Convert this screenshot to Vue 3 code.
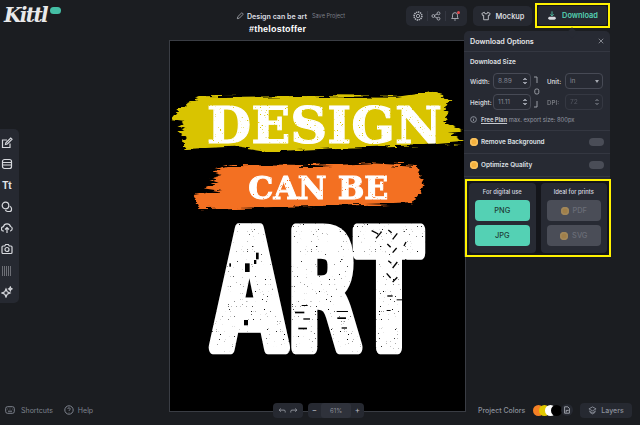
<script setup>
const speckA = [[135,160,14,26],[168,128,8,20],[88,160,5,10],[162,150,7,12],[132,330,12,16]]
const dashes = [[285,305,28,5],[310,325,20,4],[295,353,26,5],[305,285,18,3],[412,322,26,5],[410,303,34,3],[425,352,16,4],[562,256,16,4],[590,268,20,3],[560,300,12,3]]
const slashes = [[515,62,535,72],[528,85,545,65],[565,60,575,68],[578,88,592,70],[612,108,618,96],[562,102,572,112],[578,128,590,114],[565,152,574,160],[578,174,592,156],[560,190,572,204],[578,216,592,202]]
</script>

<template>
  <div class="app">
    <header class="top">
      <div class="brand">
        <span class="logo">Kittl</span>
        <span class="badge"></span>
      </div>
      <div class="title">
        <div class="title-row">
          <svg class="pencil" viewBox="0 0 12 12"><path d="M2 10l.7-3L8 1.8a1.2 1.2 0 0 1 1.7 0l.5.5a1.2 1.2 0 0 1 0 1.7L5 9.300z" /></svg>
          <span class="name">Design can be art</span>
          <span class="save">Save Project</span>
        </div>
        <div class="tag">#thelostoffer</div>
      </div>
      <div class="top-actions">
        <div class="tool-group">
          <svg class="ticon" viewBox="0 0 12 12"><circle cx="6" cy="6" r="4.700" stroke-dasharray="1.600 .8" stroke-width="1.800" /><circle cx="6" cy="6" r="2" /></svg>
          <i class="sep"></i>
          <svg class="ticon" viewBox="0 0 12 12"><circle cx="2.800" cy="6" r="1.700" /><circle cx="9" cy="2.800" r="1.700" /><circle cx="9" cy="9.200" r="1.700" /><path d="M4.300 5.200l3.200-1.700M4.300 6.800l3.200 1.700" /></svg>
          <i class="sep"></i>
          <span class="bell">
            <svg class="ticon" viewBox="0 0 12 12"><path d="M2 9h8L9 7.500V5a3 3 0 0 0-6 0v2.500zM5 10.800h2" /></svg>
            <b class="dot"></b>
          </span>
        </div>
        <button class="mockup">
          <svg class="shirt" viewBox="0 0 12 12"><path d="M4 1.500L1 3l1 2.500 1.200-.4V10.500h5.600V5.100l1.200.4L11 3 8 1.500a2 2 0 0 1-4 0z" /></svg>
          Mockup
        </button>
        <div class="hl-download">
          <button class="download">
            <svg class="dl" viewBox="0 0 12 12"><path class="dl-stroke" d="M6 1v5M4 4.500L6 6.500 8 4.500" /><rect class="dl-fill" x="1.500" y="7.500" width="9" height="3.500" rx="1.700" /></svg>
            Download
          </button>
        </div>
      </div>
    </header>

    <aside class="tools">
      <svg viewBox="0 0 12 12"><path d="M9 6.500V10.500H1.500V3H6" /><path d="M4.500 7.500l.4-1.800L9.700 1l1.300 1.300L6.300 7z" /></svg>
      <svg viewBox="0 0 12 12"><rect x="1.500" y="1.500" width="9" height="9" rx="2" /><path d="M1.500 4.500h9M1.500 7h9" /></svg>
      <span class="tt">Tt</span>
      <svg viewBox="0 0 12 12"><circle cx="4.500" cy="4.500" r="3.300" /><path d="M8.800 5.200c1 .4 1.700 1 1.700 2.300v1a2 2 0 0 1-2 2h-2c-1 0-1.700-.5-2.100-1.400" /></svg>
      <svg viewBox="0 0 12 12"><path d="M3 9H2.800a2.200 2.200 0 0 1-.3-4.400 3.600 3.600 0 0 1 7-.1A2.300 2.300 0 0 1 9.300 9H9M6 11V6M4 7.500L6 5.500 8 7.500" /></svg>
      <svg viewBox="0 0 12 12"><path d="M1 4a1 1 0 0 1 1-1h1.700l1-1.500h2.600l1 1.500H10a1 1 0 0 1 1 1v5.500a1 1 0 0 1-1 1H2a1 1 0 0 1-1-1z" /><circle cx="6" cy="6.500" r="2" /></svg>
      <svg viewBox="0 0 12 12" class="grid-ic"><path d="M1 2h10M1 4h10M1 6h10M1 8h10M1 10h10" stroke-dasharray="1 1" /></svg>
      <svg viewBox="0 0 12 12"><path d="M5 3l1.200 2.800L9 7 6.200 8.200 5 11 3.800 8.200 1 7l2.800-1.200zM9.300 1l.6 1.300 1.100.6-1.100.5-.6 1.300-.6-1.300-1.100-.5 1.100-.6z" /></svg>
    </aside>

    <main class="poster">
      <svg class="art" viewBox="0 0 295 370">
        <defs>
          <filter id="rough" x="-5%" y="-10%" width="110%" height="120%">
            <feTurbulence type="fractalNoise" baseFrequency="0.012 0.12" numOctaves="3" seed="4" />
            <feDisplacementMap in="SourceGraphic" scale="26" xChannelSelector="R" yChannelSelector="G" />
          </filter>
          <filter id="worn" x="-5%" y="-5%" width="110%" height="110%">
            <feTurbulence type="fractalNoise" baseFrequency="0.8" numOctaves="2" seed="7" result="n" />
            <feColorMatrix in="n" type="matrix" values="0 0 0 0 0  0 0 0 0 0  0 0 0 0 0  0 0 0 -9 7.300" result="m" />
            <feComposite in="SourceGraphic" in2="m" operator="in" />
          </filter>
        </defs>
        <g transform="translate(-5 39) scale(0.3333)">
          <path class="yellow" filter="url(#rough)" d="M20 118L40 92 65 70 110 52 400 48 700 50 800 35 830 45 850 65 835 90 850 100 835 125 895 155 850 158 895 185 780 195 500 205 300 215 200 200 60 207 50 180 70 175 40 150 60 140 45 130 55 122Z" />
          <path class="orange" filter="url(#rough)" d="M130 272L200 255 440 258 620 250 755 258 770 300 780 320 740 370 600 375 350 380 105 388 85 345 175 330 120 322 160 305 130 295 170 285Z" />
          <text class="slab" filter="url(#worn)" x="125" y="188" font-size="150" textLength="706" lengthAdjust="spacingAndGlyphs">DESIGN</text>
          <text class="slab" filter="url(#worn)" x="250" y="358" font-size="96" textLength="420" lengthAdjust="spacingAndGlyphs">CAN BE</text>
        </g>
        <g transform="translate(30 169) scale(0.3333)">
          <text class="block" filter="url(#worn)" transform="translate(37 412) scale(.6 1)" x="0" y="0" font-size="480">ART</text>
          <rect v-for="(d, i) in speckA.concat(dashes)" :key="i" :x="d[0]" :y="d[1]" :width="d[2]" :height="d[3]" fill="#000" />
          <line v-for="(s, i) in slashes" :key="'s' + i" :x1="s[0]" :y1="s[1]" :x2="s[2]" :y2="s[3]" stroke="#000" stroke-width="4" />
        </g>
      </svg>
    </main>

    <section class="panel">
      <span class="caret"></span>
      <div class="p-head">
        <span>Download Options</span>
        <svg viewBox="0 0 8 8"><path d="M1 1l6 6M7 1L1 7" /></svg>
      </div>
      <div class="p-size">
        <div class="p-label">Download Size</div>
        <div class="fields">
          <label>Width:</label>
          <div class="field"><span>8.89</span><em></em></div>
          <svg class="link" viewBox="0 0 8 34"><path d="M1 2h3v6M1 32h3v-6" /><rect x="1.800" y="14" width="4" height="5" rx="1.500" /></svg>
          <label class="gap">Unit:</label>
          <div class="field"><span>in</span><u></u></div>
          <label>Height:</label>
          <div class="field"><span>11.11</span><em></em></div>
          <label class="gap dim">DPI:</label>
          <div class="field dim"><span>72</span><em></em></div>
        </div>
        <div class="info">
          <svg viewBox="0 0 8 8"><circle cx="4" cy="4" r="3.300" /><path d="M4 3.500v2.200M4 2v.7" /></svg>
          <span><a>Free Plan</a> max. export size: 800px</span>
        </div>
      </div>
      <div class="opt"><b class="crown"></b><span>Remove Background</span><i class="toggle"></i></div>
      <div class="opt"><b class="crown"></b><span>Optimize Quality</span><i class="toggle"></i></div>
      <div class="formats">
        <div class="fcard">
          <h4>For digital use</h4>
          <button class="fbtn">PNG</button>
          <button class="fbtn">JPG</button>
        </div>
        <div class="fcard">
          <h4>Ideal for prints</h4>
          <button class="fbtn off"><b class="crown faded"></b>PDF</button>
          <button class="fbtn off"><b class="crown faded"></b>SVG</button>
        </div>
      </div>
    </section>

    <footer class="bottom">
      <div class="links">
        <svg viewBox="0 0 10 10"><rect x=".7" y="1.700" width="8.600" height="6.600" rx="1.800" /><path d="M2.500 4h.5M4.700 4h.6M7 4h.5M3 6.200h4" /></svg>
        <span>Shortcuts</span>
        <svg class="help-ic" viewBox="0 0 10 10"><circle cx="5" cy="5" r="4.200" /><path d="M3.800 4a1.200 1.200 0 1 1 1.700 1.100c-.4.200-.5.400-.5.900M5 7.200v.4" /></svg>
        <span>Help</span>
      </div>
      <div class="zoombar">
        <div class="pill undo">
          <svg viewBox="0 0 10 8"><path d="M9 6.500V5a1.500 1.500 0 0 0-1.500-1.500H1.500M3.500 1.500l-2 2 2 2" /></svg>
          <svg viewBox="0 0 10 8"><path d="M1 6.500V5a1.500 1.500 0 0 1 1.500-1.500h6M6.500 1.500l2 2-2 2" /></svg>
        </div>
        <div class="pill zoom">
          <span class="sym">−</span><span class="pct">61%</span><span class="sym">+</span>
        </div>
      </div>
      <div class="right">
        <span class="pc">Project Colors</span>
        <div class="swatches">
          <i class="c1"></i><i class="c2"></i><i class="c3"></i><i class="c4"></i>
          <span class="file"><svg viewBox="0 0 10 10"><path d="M2 1h4l2 2v6H2zM4 8V5.500h3" /></svg></span>
        </div>
        <button class="layers">
          <svg viewBox="0 0 10 10"><path d="M5 1l4 2.200L5 5.400 1 3.200zM1.200 5.500L5 7.600l3.800-2.100M2 7l3 1.700L8 7" /></svg>
          Layers
        </button>
      </div>
    </footer>
  </div>
</template>

<style scoped>
.app {
  width: 640px;
  height: 425px;
  overflow: hidden;
  position: relative;
  display: grid;
  grid-template: 425px / 640px;
  background: #1b1d21;
  font-family: Inter, "Liberation Sans", sans-serif;
  color: #c9ccd3;
}
.app > * { grid-area: 1 / 1; }
svg { fill: none; stroke: currentColor; stroke-width: 1; display: block; }
button { font-family: inherit; border: 0; padding: 0; }

/* header */
.top {
  align-self: start;
  height: 34px;
  display: flex;
  align-items: flex-start;
  z-index: 2;
  position: relative;
}
.brand { display: flex; align-items: flex-start; padding: 4px 0 0 4px; width: 234px; box-sizing: content-box; }
.logo {
  font: italic 700 20px/22px "DejaVu Serif", serif;
  color: #e9e9ea;
  letter-spacing: -1.600px;
}
.badge { width: 11px; height: 7px; border-radius: 4px; background: #45bfa5; margin: 3px 0 0 3px; }
.title { width: 160px; padding-top: 11px; }
.title-row { display: flex; align-items: center; height: 10px; }
.pencil { width: 8px; height: 8px; color: #c9ccd3; margin: 0 3px 0 -2px; }
.name { font-size: 7.100px; font-weight: 600; color: #dcdee2; white-space: nowrap; }
.save { font-size: 5.600px; color: #7b7f89; margin-left: 5px; white-space: nowrap; }
.tag { font: 700 9px/11px "Liberation Sans", sans-serif; color: #fff; margin: 3px 0 0 11px; letter-spacing: .2px; }
.top-actions { display: flex; align-items: flex-start; margin-left: 8px; }
.tool-group {
  margin-top: 6px;
  width: 61px; height: 20px;
  background: #262931;
  border-radius: 5px;
  display: flex; align-items: center; justify-content: space-around;
  padding: 0 5px;
  box-sizing: border-box;
  color: #b9bcc4;
}
.ticon { width: 10px; height: 10px; }
.sep { width: 1px; height: 10px; background: #343741; }
.bell { position: relative; display: block; }
.dot { position: absolute; right: 0; top: 0; width: 3px; height: 3px; background: #e5484d; border-radius: 50%; }
.mockup {
  margin: 6px 0 0 6px;
  width: 59px; height: 20px;
  background: #262931;
  border-radius: 5px;
  display: flex; align-items: center; justify-content: center; gap: 5px;
  color: #d5d7dc;
  font-size: 7.400px; font-weight: 600;
}
.shirt { width: 10px; height: 10px; }
.hl-download {
  margin: 3px 0 0 3px;
  width: 75px; height: 25px;
  box-sizing: border-box;
  border: 2px solid #fff200;
  background: #14151a;
  padding: 1px;
}
.download {
  width: 100%; height: 100%;
  background: #262931;
  border-radius: 2px;
  display: flex; align-items: center; justify-content: center; gap: 5px;
  color: #54d1b4;
  font-size: 7.400px; font-weight: 600;
}
.dl { width: 10px; height: 11px; }
.dl-stroke { stroke: #54d1b4; }
.dl-fill { stroke: none; fill: #d9dbe0; }

/* left tools */
.tools {
  align-self: start;
  justify-self: start;
  margin-top: 129px;
  width: 19px; height: 174px;
  background: #262931;
  border-radius: 0 5px 5px 0;
  display: flex; flex-direction: column; align-items: center;
  gap: 9.300px;
  padding: 8px 5px 0 0;
  box-sizing: border-box;
  color: #d7d9de;
}
.tools svg { width: 12px; height: 12px; flex: none; stroke-width: 1.200; }
.tools .grid-ic { stroke-width: 1.100; opacity: .8; }
.tt { font: 700 10px/12px "Liberation Sans", sans-serif; height: 12px; color: #e2e4e8; }

/* poster */
.poster {
  align-self: start;
  justify-self: start;
  margin: 41px 0 0 170px;
  width: 295px; height: 370px;
  background: #000;
  outline: 1px solid #3a3d44;
}
.art { width: 295px; height: 370px; stroke: none; }
.yellow { fill: #d9c400; }
.orange { fill: #f36f21; }
.slab { font-family: "DejaVu Serif", serif; font-weight: 700; fill: #fff; stroke: #fff; stroke-width: 3; }
.block { font-family: "DejaVu Sans", sans-serif; font-weight: 700; fill: #fff; stroke: #fff; stroke-width: 40; stroke-linejoin: round; }

/* panel */
.panel {
  align-self: start;
  justify-self: start;
  position: absolute;
  left: 464px; top: 31px;
  width: 146px;
  background: #272a33;
  border-radius: 5px 5px 0 0;
  z-index: 3;
  font-size: 6.400px;
}
.caret {
  position: absolute; left: 104px; top: -2px;
  width: 8px; height: 8px; background: #272a33; transform: rotate(45deg);
}
.p-head {
  height: 21px; box-sizing: border-box;
  display: flex; align-items: center; justify-content: space-between;
  padding: 0 6px;
  border-bottom: 1px solid #343741;
  font-size: 7.200px; font-weight: 600; color: #e6e7ea;
  position: relative;
}
.p-head svg { width: 6px; height: 6px; color: #a0a3ab; }
.p-size { height: 79px; box-sizing: border-box; padding: 6px 6px 0; border-bottom: 1px solid #343741; }
.p-label { font-size: 6.400px; font-weight: 600; color: #e0e2e6; line-height: 9px; }
.fields {
  margin-top: 6px;
  display: grid;
  grid-template-columns: 23px 38px 13px 21px 38px;
  grid-template-rows: 16px 16px;
  row-gap: 5px;
  align-items: center;
}
.fields label { font-weight: 600; color: #d2d4d9; font-size: 6.200px; }
.fields .gap { padding-left: 3px; }
.fields .dim, .field.dim { opacity: .45; }
.link { grid-row: 1 / 3; grid-column: 3; width: 8px; height: 34px; margin-left: 2px; color: #a6a9b1; stroke-width: .9; }
.field {
  height: 16px; box-sizing: border-box;
  border: 1px solid #474a55;
  border-radius: 4px;
  display: flex; align-items: center; justify-content: space-between;
  padding: 0 3px 0 4px;
  color: #858994;
  font-size: 6.600px;
  position: relative;
}
.field em { width: 4px; height: 8px; background:
  linear-gradient(135deg, transparent 50%, #9599a3 50%) 0 0 / 2px 3px no-repeat,
  linear-gradient(225deg, transparent 50%, #9599a3 50%) 2px 0 / 2px 3px no-repeat,
  linear-gradient(45deg, transparent 50%, #9599a3 50%) 0 5px / 2px 3px no-repeat,
  linear-gradient(315deg, transparent 50%, #9599a3 50%) 2px 5px / 2px 3px no-repeat; }
.field u { border: 2.500px solid transparent; border-top: 3px solid #a6a9b1; border-bottom: 0; }
.info { display: flex; align-items: center; gap: 4px; margin-top: 5px; color: #9599a3; font-size: 5.800px; white-space: nowrap; height: 9px; }
.info svg { width: 7px; height: 7px; flex: none; }
.info a { color: #c6c9cf; font-weight: 700; text-decoration: underline; }
.opt {
  height: 23px; box-sizing: border-box;
  display: flex; align-items: center;
  padding: 0 6px;
  border-bottom: 1px solid #343741;
  color: #dfe1e5; font-weight: 600; font-size: 6.400px;
}
.opt span { flex: 1; margin-left: 3px; }
.crown { width: 8px; height: 8px; border-radius: 50%; background: #f5b13d; flex: none; display: block; box-shadow: inset 0 0 0 1.500px #f9c25f; }
.toggle { width: 15px; height: 8px; border-radius: 4px; background: #4a4d57; }
.formats {
  margin-top: 2px;
  box-sizing: border-box;
  height: 78px;
  margin-left: 1px; width: 146px;
  border: 2px solid #fff200;
  background: #14151a;
  padding: 2px;
  display: flex; gap: 5px;
  position: relative;
}
.fcard { flex: 1; background: #272a33; border-radius: 4px; padding: 0 6px; text-align: center; }
.fcard h4 { margin: 0; font-size: 5.800px; font-weight: 500; color: #d9dbe0; line-height: 17px; height: 17px; }
.fbtn {
  display: flex; align-items: center; justify-content: center; gap: 4px;
  width: 100%; height: 21px;
  margin-bottom: 4px;
  background: #54d1b4;
  border-radius: 4px;
  color: #1f3d38;
  font-size: 7.400px;
  font-weight: 500;
}
.fbtn.off { background: #4a4d57; color: #6b6e78; }
.crown.faded { opacity: .5; }

/* footer */
.bottom {
  align-self: end;
  height: 30px;
  display: grid;
  grid-template-columns: 270px 95px 1fr;
  align-items: center;
  font-size: 7px;
  color: #7e838e;
}
.links { display: flex; align-items: center; padding-left: 5px; gap: 6px; }
.links svg { width: 10px; height: 10px; }
.links .help-ic { margin-left: 5px; margin-right: -2px; }
.zoombar { display: flex; gap: 5px; margin-left: 3px; }
.pill { height: 15px; background: #262931; border-radius: 4px; display: flex; align-items: center; color: #a6a9b1; }
.undo { width: 30px; justify-content: space-around; padding: 0 3px; box-sizing: border-box; }
.undo svg { width: 8px; height: 7px; }
.zoom { width: 56px; justify-content: space-between; }
.sym { width: 13px; text-align: center; font-size: 8px; color: #b9bcc4; }
.pct { width: 30px; height: 15px; line-height: 15px; text-align: center; background: #2f323b; border-radius: 3px; font-size: 6px; color: #8b8f99; }
.right { display: flex; align-items: center; padding-left: 113px; }
.pc { width: 55px; white-space: nowrap; font-size: 7px; color: #8c919c; font-weight: 500; }
.swatches { display: flex; align-items: center; width: 47px; }
.swatches i { width: 11px; height: 11px; border-radius: 50%; margin-right: -5px; display: block; }
.c1 { background: #f58025; }
.c2 { background: #e1c800; }
.c3 { background: #fff; }
.c4 { background: #000; }
.file { width: 12px; height: 12px; border-radius: 50%; background: #262931; margin-left: 4px; display: flex; align-items: center; justify-content: center; color: #b9bcc4; position: relative; }
.file svg { width: 8px; height: 8px; }
.layers {
  width: 52px; height: 15px;
  background: #262931; border-radius: 4px;
  display: flex; align-items: center; justify-content: center; gap: 4px;
  font-size: 7px; color: #8c919c; font-weight: 500;
}
.layers svg { width: 9px; height: 9px; }
</style>
